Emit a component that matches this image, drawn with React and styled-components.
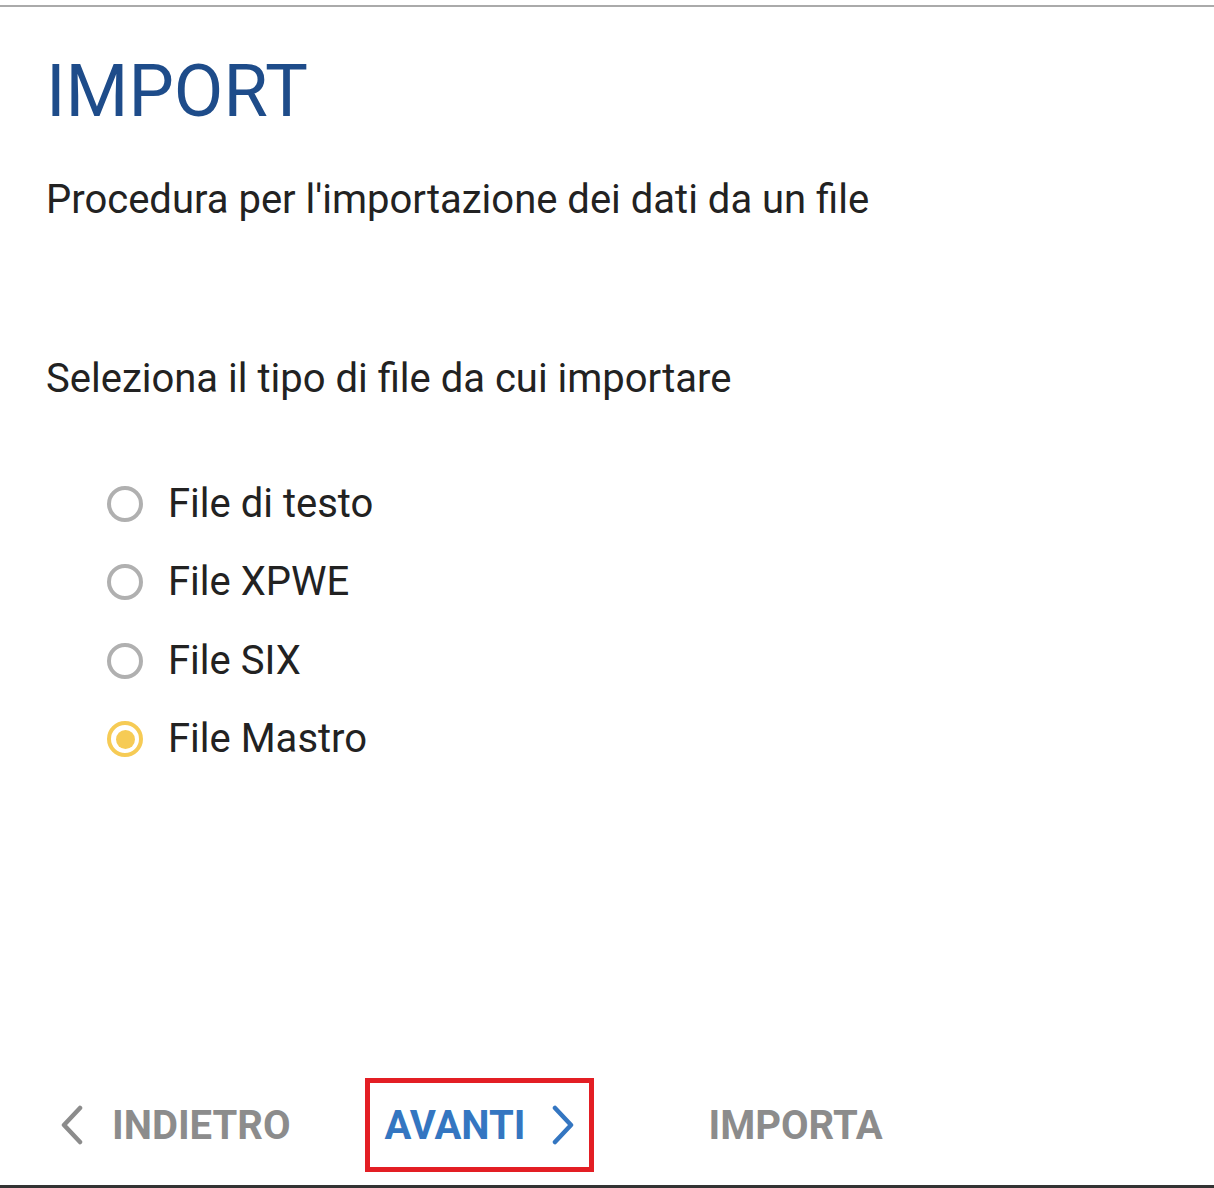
import React, { useState } from "react";
import styled, { createGlobalStyle } from "styled-components";

const Global = createGlobalStyle`
  html, body { margin: 0; padding: 0; background: #fff; }
  body { font-family: Roboto, "Noto Sans", Arial, sans-serif; }
  * { box-sizing: border-box; }
`;

const Page = styled.div`
  width: 1214px;
  height: 1188px;
  padding-top: 5px;
  display: flex;
  flex-direction: column;
  background: #fff;
`;

const Panel = styled.div`
  flex: 1;
  display: flex;
  flex-direction: column;
  border-top: 2px solid #aaaaaa;
  border-bottom: 3px solid #333333;
`;

const Content = styled.div`
  padding: 43px 46px 0;
  display: flex;
  flex-direction: column;
`;

const Title = styled.h1`
  margin: 0;
  font-size: 72px;
  line-height: 84px;
  font-weight: 400;
  color: #1e4c8a;
`;

const Subtitle = styled.p`
  margin: ${(p) => p.$top}px 0 0;
  font-size: 40px;
  line-height: 44px;
  color: #222;
`;

const RadioList = styled.div`
  margin-top: 64px;
  padding-left: 61px;
  display: flex;
  flex-direction: column;
`;

const RadioRow = styled.label`
  height: 78.3px;
  display: flex;
  align-items: center;
  gap: 25px;
  cursor: pointer;
`;

const RadioCircle = styled.span`
  width: 36px;
  height: 36px;
  border-radius: 50%;
  border: 4px solid ${(p) => (p.$checked ? "#f6cb55" : "#b0b0b0")};
  display: flex;
  align-items: center;
  justify-content: center;
  flex-shrink: 0;
  &::after {
    content: "";
    width: 19px;
    height: 19px;
    border-radius: 50%;
    background: ${(p) => (p.$checked ? "#f6cb55" : "transparent")};
  }
`;

const RadioLabel = styled.span`
  font-size: 40px;
  line-height: 44px;
  color: #222;
`;

const Footer = styled.div`
  margin-top: auto;
  height: 120px;
  display: flex;
  align-items: center;
  padding-left: 41px;
`;

const NavButton = styled.button`
  margin-left: ${(p) => p.$gap || 0}px;
  background: none;
  border: 5px solid ${(p) => (p.$highlight ? "#e31e24" : "transparent")};
  height: 94px;
  padding: 0 15px;
  display: flex;
  align-items: center;
  gap: ${(p) => p.$iconGap || 0}px;
  font-family: Roboto, Arial, sans-serif;
  font-weight: 700;
  font-size: 40px;
  color: ${(p) => (p.$active ? "#3476c1" : "#8c8c8c")};
  cursor: pointer;
`;

const Chevron = ({ dir, color }) => (
  <svg width="22" height="40" viewBox="0 0 22 40" fill="none">
    <polyline
      points={dir === "left" ? "19,3 3,20 19,37" : "3,3 19,20 3,37"}
      stroke={color}
      strokeWidth="4.5"
      strokeLinecap="round"
      strokeLinejoin="round"
    />
  </svg>
);

const options = ["File di testo", "File XPWE", "File SIX", "File Mastro"];

export default function App() {
  const [selected, setSelected] = useState(3);
  return (
    <>
      <Global />
      <Page>
        <Panel>
          <Content>
            <Title>IMPORT</Title>
            <Subtitle $top={44}>Procedura per l'importazione dei dati da un file</Subtitle>
            <Subtitle $top={135}>Seleziona il tipo di file da cui importare</Subtitle>
            <RadioList>
              {options.map((o, i) => (
                <RadioRow key={o} onClick={() => setSelected(i)}>
                  <RadioCircle $checked={selected === i} />
                  <RadioLabel>{o}</RadioLabel>
                </RadioRow>
              ))}
            </RadioList>
          </Content>
          <Footer>
            <NavButton $iconGap={29}>
              <Chevron dir="left" color="#8c8c8c" />
              INDIETRO
            </NavButton>
            <NavButton $gap={54} $highlight $active $iconGap={26}>
              AVANTI
              <Chevron dir="right" color="#3476c1" />
            </NavButton>
            <NavButton $gap={95}>IMPORTA</NavButton>
          </Footer>
        </Panel>
      </Page>
    </>
  );
}
